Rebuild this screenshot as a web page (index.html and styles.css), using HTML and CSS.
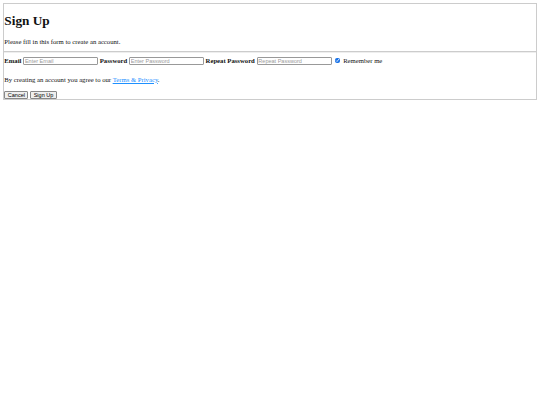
FILE: index.html
```html
<!DOCTYPE html>
<html>
<head>
<meta charset="utf-8">
<link rel="stylesheet" href="styles.css">
</head>
<body class="page">
<form class="signup">
  <div class="container">
    <h1 class="title">Sign Up</h1>
    <p class="intro">Please fill in this form to create an account.</p>
    <hr class="divider">
    <div class="fields">
      <label class="field-label" for="email">Email</label>
      <input class="field" type="text" placeholder="Enter Email" id="email">
      <label class="field-label" for="psw">Password</label>
      <input class="field" type="password" placeholder="Enter Password" id="psw">
      <label class="field-label" for="psw-repeat">Repeat Password</label>
      <input class="field" type="password" placeholder="Repeat Password" id="psw-repeat">
      <label class="remember"><input class="check" type="checkbox" checked> Remember me</label>
    </div>
    <p class="terms">By creating an account you agree to our <a class="terms-link" href="#">Terms &amp; Privacy</a>.</p>
    <div class="actions">
      <button type="button" class="btn">Cancel</button>
      <button type="submit" class="btn">Sign Up</button>
    </div>
  </div>
</form>
</body>
</html>
```

FILE: styles.css
```css
.page {
  margin: 3.32px;
  font-family: "Liberation Serif", "Times New Roman", serif;
  font-size: 6.7px;
  color: #111;
  background: #fff;
  font-variant-ligatures: none;
}
.signup {
  border: 1px solid #ccc;
}
.title {
  font-size: 13.28px;
  font-weight: bold;
  margin: 8.6px 0;
}
.intro {
  margin: 6.64px 0;
}
.terms {
  margin: 6.64px 0 7.64px;
}
.divider {
  margin: 3.32px 0;
  border: 0;
  border-top: 1px solid #ccc;
  border-bottom: 1px solid #eee;
}
.fields {
  line-height: normal;
}
.field-label {
  font-weight: bold;
}
.field {
  box-sizing: border-box;
  width: 75px;
  height: 8.7px;
  margin: 0;
  font-family: "Liberation Sans", Arial, sans-serif;
  font-size: 5.53px;
  padding: 0 0.83px;
  border: 1px solid #999;
  border-radius: 1px;
  vertical-align: baseline;
}
.field::placeholder {
  color: #9a9a9a;
}
.check {
  width: 5.4px;
  height: 5.4px;
  margin: 1.25px 1.25px 6.2px 1.66px;
  accent-color: #1a73e8;
}
.terms-link {
  color: dodgerblue;
}
.btn {
  font-family: "Liberation Sans", Arial, sans-serif;
  font-size: 5.53px;
  padding: 0.4px 2.5px;
  margin: 0;
  background: #efefef;
  border: 1px solid #888;
  border-radius: 1px;
  color: #000;
}
```
